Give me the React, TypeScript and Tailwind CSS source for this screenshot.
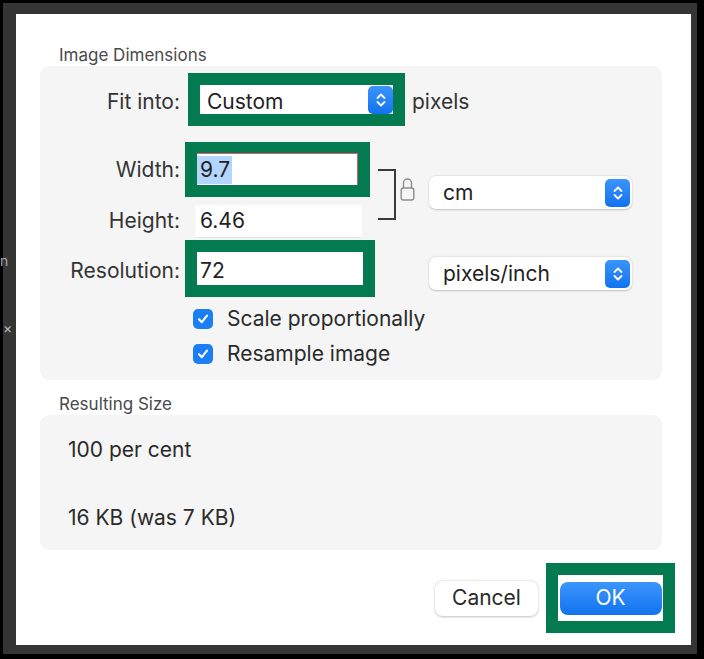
import React from "react";

const GREEN = "bg-[#037a4f]";

function Stepper({ className = "" }: { className?: string }) {
  return (
    <div
      className={`w-[25px] h-[28px] rounded-[5px] bg-gradient-to-b from-[#3b94fb] to-[#0f72ef] flex items-center justify-center ${className}`}
    >
      <svg width="12" height="18" viewBox="0 0 12 18" fill="none">
        <path d="M2.5 7 6 3.5 9.5 7" stroke="white" strokeWidth="1.8" strokeLinecap="round" strokeLinejoin="round" />
        <path d="M2.5 11 6 14.5 9.5 11" stroke="white" strokeWidth="1.8" strokeLinecap="round" strokeLinejoin="round" />
      </svg>
    </div>
  );
}

function Select({ value }: { value: string }) {
  return (
    <div className="w-[203px] h-[33px] bg-white rounded-[7px] shadow-[0_0.5px_2px_rgba(0,0,0,0.22)] flex items-center justify-between pl-[14px] pr-[2px]">
      <span className="text-[#222]">{value}</span>
      <Stepper />
    </div>
  );
}

function Checkbox({ label }: { label: string }) {
  return (
    <div className="h-[26px] flex items-center pl-[153px] gap-[14px]">
      <div className="w-[20px] h-[20px] rounded-[5px] bg-[#1b7ef5] flex items-center justify-center">
        <svg width="14" height="14" viewBox="0 0 14 14" fill="none">
          <path d="M3 7.3 5.8 10.2 11 3.6" stroke="white" strokeWidth="2.1" strokeLinecap="round" strokeLinejoin="round" />
        </svg>
      </div>
      <span className="text-[#2a2a2a]">{label}</span>
    </div>
  );
}

export default function App() {
  return (
    <div
      className="relative w-[704px] h-[659px] bg-black pt-[3px] pl-[3px] pr-[7px] pb-[5px]"
      style={{ fontFamily: "Inter, 'Liberation Sans', sans-serif" }}
    >
      <div className="w-full h-full bg-[#353535] pt-[11px] pl-[13px] pr-[6px] pb-[9px]">
        <div className="w-full h-full bg-white text-[21px] text-[#333]">
          {/* Image Dimensions */}
          <div className="pt-[30px] pl-[43px] text-[17px] leading-[22px] text-[#4a4a4a]">Image Dimensions</div>
          <div className="ml-[24px] w-[622px] h-[314px] bg-[#f5f5f5] rounded-[9px] pt-[7px]">
            {/* Fit into */}
            <div className="h-[53px] flex items-center">
              <span className="w-[140px] text-right mt-[5px]">Fit into:</span>
              <div className={`ml-[8px] w-[217px] h-[53px] ${GREEN} p-[12px]`}>
                <div className="w-full h-full bg-white flex items-center justify-between pl-[7px]">
                  <span className="text-[#222] mt-[4px]">Custom</span>
                  <Stepper />
                </div>
              </div>
              <span className="ml-[7px] mt-[5px]">pixels</span>
            </div>

            {/* Width / Height / Resolution */}
            <div className="mt-[16px] flex">
              <div className="w-[335px]">
                <div className="h-[55px] flex items-center">
                  <span className="w-[140px] text-right">Width:</span>
                  <div className={`ml-[5px] w-[185px] h-[55px] ${GREEN} pt-[11px] pb-[12px] px-[12px]`}>
                    <div className="w-full h-full bg-white border-t border-r border-[#dc5a6e] flex items-center">
                      <span className="bg-[#b4d5fe] text-[#222] pl-[3px] pr-[2px] leading-[28px]">9.7</span>
                    </div>
                  </div>
                </div>
                <div className="mt-[8px] h-[32px] flex items-center">
                  <span className="w-[140px] text-right">Height:</span>
                  <div className="ml-[15px] w-[167px] h-[32px] bg-white shadow-[0_0.5px_1px_rgba(0,0,0,0.08)] flex items-center pl-[5px] text-[#222]">
                    6.46
                  </div>
                </div>
                <div className="mt-[3px] h-[57px] flex items-center">
                  <span className="w-[140px] text-right mt-[5px]">Resolution:</span>
                  <div className={`ml-[5px] w-[190px] h-[57px] ${GREEN} p-[12px]`}>
                    <div className="w-full h-full bg-white flex items-center pl-[3px] pt-[5px] text-[#222]">72</div>
                  </div>
                </div>
              </div>

              {/* bracket + lock */}
              <div className="ml-[3px] mt-[27px] w-[18px] h-[51px] border-t-2 border-r-2 border-b-2 border-[#3a3a3a]" />
              <div className="ml-[4px] mt-[33px]">
                <svg width="15" height="27" viewBox="0 0 15 27" fill="none">
                  <path d="M3.5 13V8a4 4 0 0 1 8 0v5" stroke="#8c8c8c" strokeWidth="1.4" />
                  <rect x="1.2" y="13" width="12.6" height="12" rx="2.2" stroke="#8c8c8c" strokeWidth="1.4" />
                </svg>
              </div>

              <div className="ml-[14px] mt-[34px] flex flex-col gap-[48px]">
                <Select value="cm" />
                <Select value="pixels/inch" />
              </div>
            </div>

            {/* checkboxes */}
            <div className="mt-[9px] flex flex-col gap-[9px]">
              <Checkbox label="Scale proportionally" />
              <Checkbox label="Resample image" />
            </div>
          </div>

          {/* Resulting Size */}
          <div className="mt-[13px] pl-[43px] text-[17px] leading-[22px] text-[#4a4a4a]">Resulting Size</div>
          <div className="ml-[24px] w-[622px] h-[135px] bg-[#f5f5f5] rounded-[9px] pl-[28px] text-[#2a2a2a]">
            <div className="pt-[22px] leading-[26px]">100 per cent</div>
            <div className="mt-[42px] leading-[26px]">16 KB (was 7 KB)</div>
          </div>

          {/* Buttons */}
          <div className="mt-[13px] flex justify-end items-center gap-[8px] pr-[16px]">
            <button className="w-[103px] h-[35px] bg-white rounded-[8px] shadow-[0_0.5px_2.5px_rgba(0,0,0,0.25)] text-[#2a2a2a]">
              Cancel
            </button>
            <div className={`w-[129px] h-[70px] ${GREEN} p-[12px]`}>
              <div className="w-full h-full bg-white flex items-center justify-center">
                <button className="w-[102px] h-[33px] rounded-[8px] bg-gradient-to-b from-[#3b95fc] to-[#0f73f0] text-white">
                  OK
                </button>
              </div>
            </div>
          </div>
        </div>
      </div>

      {/* stray background glyphs */}
      <span className="absolute left-[0px] top-[250px] text-[14px] text-[#aaa]">n</span>
      <span className="absolute left-[3px] top-[317px] text-[14px] text-[#bbb]">×</span>
    </div>
  );
}
